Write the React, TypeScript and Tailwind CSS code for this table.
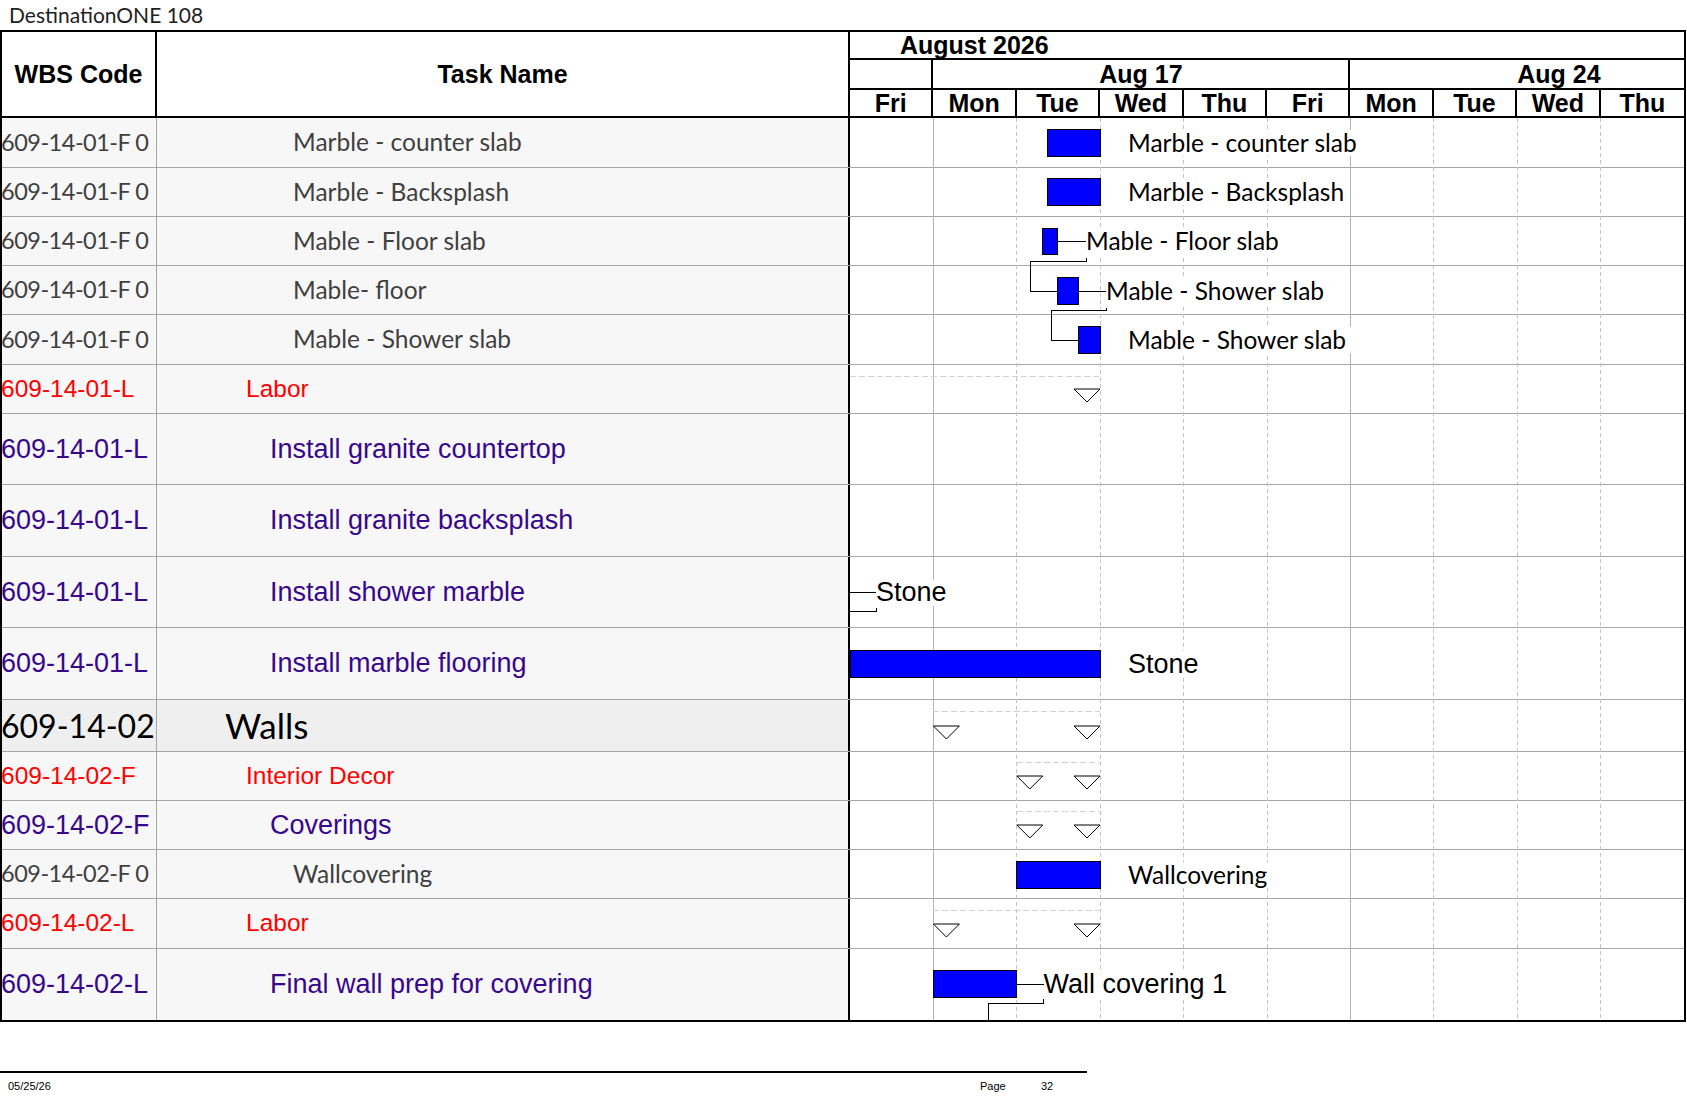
import React from 'react'

const DAY = 83.4
const X0 = 850
const TOP = 118
// body sits inside the 2px left border of the table
const BODY_X = 2

type Kind = 'item' | 'labor' | 'task' | 'group'

interface Row {
  wbs: string
  task: string
  kind: Kind
  h: string
}

const ROWS: Row[] = [
  { wbs: '609-14-01-F 0', task: 'Marble - counter slab', kind: 'item', h: 'h-[50px]' },
  { wbs: '609-14-01-F 0', task: 'Marble - Backsplash', kind: 'item', h: 'h-[49px]' },
  { wbs: '609-14-01-F 0', task: 'Mable - Floor slab', kind: 'item', h: 'h-[49px]' },
  { wbs: '609-14-01-F 0', task: 'Mable- floor', kind: 'item', h: 'h-[49px]' },
  { wbs: '609-14-01-F 0', task: 'Mable - Shower slab', kind: 'item', h: 'h-[50px]' },
  { wbs: '609-14-01-L', task: 'Labor', kind: 'labor', h: 'h-[49px]' },
  { wbs: '609-14-01-L', task: 'Install granite countertop', kind: 'task', h: 'h-[71px]' },
  { wbs: '609-14-01-L', task: 'Install granite backsplash', kind: 'task', h: 'h-[72px]' },
  { wbs: '609-14-01-L', task: 'Install shower marble', kind: 'task', h: 'h-[71px]' },
  { wbs: '609-14-01-L', task: 'Install marble flooring', kind: 'task', h: 'h-[72px]' },
  { wbs: '609-14-02', task: 'Walls', kind: 'group', h: 'h-[52px]' },
  { wbs: '609-14-02-F', task: 'Interior Decor', kind: 'labor', h: 'h-[49px]' },
  { wbs: '609-14-02-F', task: 'Coverings', kind: 'task', h: 'h-[49px]' },
  { wbs: '609-14-02-F 0', task: 'Wallcovering', kind: 'item', h: 'h-[49px]' },
  { wbs: '609-14-02-L', task: 'Labor', kind: 'labor', h: 'h-[50px]' },
  { wbs: '609-14-02-L', task: 'Final wall prep for covering', kind: 'task', h: 'h-[71px]' },
]

const wbsClass: Record<Kind, string> = {
  item: "font-['Lato',sans-serif] text-[23.5px] tracking-[-0.5px] text-[#404040]",
  labor: "font-['Liberation_Sans',Arial,sans-serif] text-[24.5px] text-[#ff0000]",
  task: "font-['Liberation_Sans',Arial,sans-serif] text-[27px] text-[#38088c]",
  group: "font-['Lato',sans-serif] text-[32px] text-black",
}

const taskClass: Record<Kind, string> = {
  item: "pl-[136px] font-['Lato',sans-serif] text-[24.5px] text-[#404040]",
  labor: "pl-[89px] font-['Liberation_Sans',Arial,sans-serif] text-[24.5px] text-[#ff0000]",
  task: "pl-[113px] font-['Liberation_Sans',Arial,sans-serif] text-[27px] text-[#38088c]",
  group: "pl-[68px] font-['Lato',sans-serif] text-[35px] text-black",
}

const DAYS = ['Fri', 'Mon', 'Tue', 'Wed', 'Thu', 'Fri', 'Mon', 'Tue', 'Wed', 'Thu']

// bars: x1, y1, x2, y2 in page coords
const BARS = [
  [1047, 129.5, 1100, 156.5],
  [1047, 178.5, 1100, 205.5],
  [1042, 228.5, 1057, 254.5],
  [1057, 277.5, 1078, 304.5],
  [1078, 326.5, 1100, 353.5],
  [850, 650.5, 1100, 677.5],
  [1016.8, 861.5, 1100, 888.5],
  [933.4, 970.5, 1016.8, 997.5],
]

const LINKS = [
  'M1057 241.5H1086',
  'M1086 258V261H1030.5V291.5H1057',
  'M1078 291.5H1106',
  'M1106 308V310.5H1051.5V340.5H1078',
  'M850 592.5H876',
  'M876.5 607.5V611.5H850',
  'M1016.8 984.5H1043.5',
  'M1043.5 998.5V1003.5H988.5V1021',
]

const SUMMARY = [
  [850, 1100, 376.5],
  [933.4, 1100, 711.5],
  [1016.8, 1100, 762.5],
  [1016.8, 1100, 811.5],
  [933.4, 1100, 910.5],
]

const TRIS = [
  [1074, 389],
  [933.4, 726], [1074, 726],
  [1016.8, 776], [1074, 776],
  [1016.8, 825], [1074, 825],
  [933.4, 924], [1074, 924],
]

const LABELS = [
  { text: 'Marble - counter slab', x: 1128, cy: 143, arial: false },
  { text: 'Marble - Backsplash', x: 1128, cy: 192, arial: false },
  { text: 'Mable - Floor slab', x: 1086, cy: 241.5, arial: false },
  { text: 'Mable - Shower slab', x: 1106, cy: 291, arial: false },
  { text: 'Mable - Shower slab', x: 1128, cy: 340, arial: false },
  { text: 'Stone', x: 876, cy: 592.5, arial: true },
  { text: 'Stone', x: 1128, cy: 664, arial: true },
  { text: 'Wallcovering', x: 1128, cy: 875, arial: false },
  { text: 'Wall covering 1', x: 1043.5, cy: 984.5, arial: true },
]

function ChartOverlay() {
  return (
    <svg
      className="absolute left-[848px] top-0 w-[834px] h-[902px] pointer-events-none"
      viewBox={`850 ${TOP} 834 902`}
      shapeRendering="crispEdges"
    >
      {[1, 2, 3, 4, 5, 6, 7, 8, 9].map(k => {
        const x = X0 + k * DAY
        const solid = k === 1 || k === 6
        return (
          <line key={k} x1={x} x2={x} y1={TOP} y2={TOP + 902}
            stroke={solid ? '#b4b4b4' : '#c4c4c4'} strokeWidth={1}
            strokeDasharray={solid ? undefined : '4 3'} />
        )
      })}
      {SUMMARY.map(([x1, x2, y], i) => (
        <line key={i} x1={x1} x2={x2} y1={y} y2={y} stroke="#d2d2d2" strokeWidth={1.5} strokeDasharray="6 3" />
      ))}
      {TRIS.map(([x, y], i) => (
        <polygon key={i} points={`${x},${y} ${x + 26},${y} ${x + 13},${y + 13}`}
          fill="white" stroke="black" strokeWidth={1} shapeRendering="auto" />
      ))}
      {LINKS.map((d, i) => (
        <path key={i} d={d} fill="none" stroke="black" strokeWidth={1} />
      ))}
      {BARS.map(([x1, y1, x2, y2], i) => (
        <rect key={i} x={x1} y={y1} width={x2 - x1} height={y2 - y1} fill="#0000ff" stroke="#000" strokeWidth={1} />
      ))}
    </svg>
  )
}

export default function App() {
  return (
    <div className="w-[1687px] h-[1097px] bg-white relative overflow-hidden text-black">
      <div className="h-[30px] pl-[9px] flex items-center font-['Lato',sans-serif] text-[21px] text-[#222]">
        DestinationONE 108
      </div>

      <div className="w-[1686px] border-t-2 border-l-2 border-r-2 border-b-2 border-black">
        {/* header */}
        <div className="flex h-[86px] border-b-2 border-black font-['Liberation_Sans',Arial,sans-serif] font-bold text-[25px] leading-none">
          <div className="w-[155px] border-r-2 border-black flex items-center justify-center">WBS Code</div>
          <div className="w-[693px] border-r-2 border-black flex items-center justify-center">Task Name</div>
          <div className="flex-1 flex flex-col">
            <div className="h-[28px] border-b-2 border-black flex items-center pl-[50px]">August 2026</div>
            <div className="h-[30px] border-b-2 border-black grid grid-cols-10">
              <div className="col-span-1 border-r-2 border-black" />
              <div className="col-span-5 border-r-2 border-black flex items-center justify-center">Aug 17</div>
              <div className="col-span-4 overflow-hidden flex items-center">
                <div className="w-[417px] shrink-0 text-center">Aug 24</div>
              </div>
            </div>
            <div className="flex-1 grid grid-cols-10">
              {DAYS.map((d, i) => (
                <div key={i} className={`flex items-center justify-center ${i < 9 ? 'border-r-2 border-black' : ''}`}>
                  {d}
                </div>
              ))}
            </div>
          </div>
        </div>

        {/* body */}
        <div className="relative">
          {ROWS.map((r, i) => {
            const last = i === ROWS.length - 1
            const bg = r.kind === 'group' ? 'bg-[#efefef]' : 'bg-[#f7f7f7]'
            return (
              <div key={i} className={`flex ${r.h} ${last ? '' : 'border-b border-[#a6a6a6]'}`}>
                <div className={`w-[155px] ${bg} border-r border-[#a6a6a6] flex items-center overflow-hidden whitespace-nowrap leading-none ${wbsClass[r.kind]}`}>
                  <span className="-ml-[1px]">{r.wbs}</span>
                </div>
                <div className={`w-[693px] ${bg} border-r-2 border-black flex items-center whitespace-nowrap leading-none ${taskClass[r.kind]}`}>
                  {r.task}
                </div>
                <div className="flex-1 bg-white" />
              </div>
            )
          })}
          <ChartOverlay />
          {LABELS.map((l, i) => (
            <div
              key={i}
              className={`absolute h-[26px] flex items-center bg-white pr-[6px] whitespace-nowrap leading-none text-black ${l.arial ? "font-['Liberation_Sans',Arial,sans-serif] text-[27px]" : "font-['Lato',sans-serif] text-[24.5px]"}`}
              style={{ left: l.x - BODY_X, top: l.cy - 13 - TOP }}
            >
              {l.text}
            </div>
          ))}
        </div>
      </div>

      {/* footer */}
      <div className="mt-[49px] w-[1087px] border-t-2 border-black flex pt-[6px] font-['Liberation_Sans_Narrow','Liberation_Sans',Arial,sans-serif] text-[11px] leading-[14px] text-black">
        <div className="w-[980px] pl-[8px]">05/25/26</div>
        <div className="w-[61px]">Page</div>
        <div>32</div>
      </div>
    </div>
  )
}
